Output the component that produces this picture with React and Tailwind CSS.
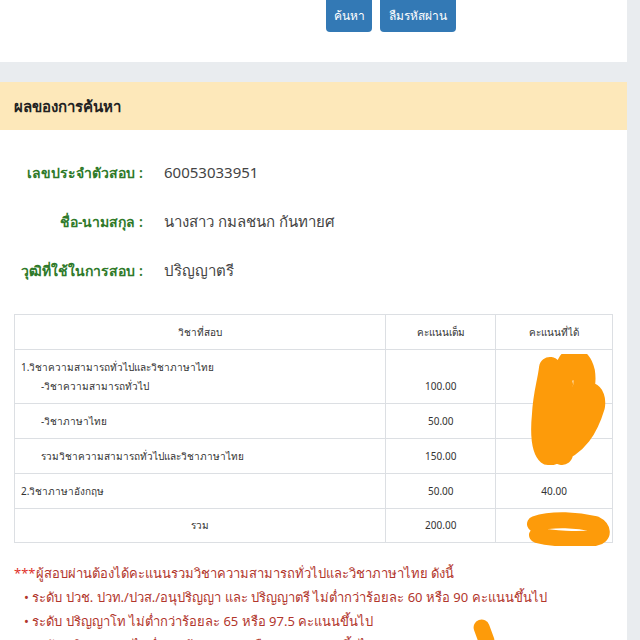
export default function App() {
  const font = { fontFamily: '"Noto Sans", "DejaVu Sans", sans-serif' };
  return (
    <div className="w-[640px] h-[640px] overflow-hidden bg-[#e9ecef]" style={font}>
      <div className="w-[627px] flex flex-col">
        {/* top card */}
        <div className="h-[62px] bg-white flex flex-col overflow-hidden">
          <div className="flex gap-[8px] pl-[326px] -mt-[4px]">
            <button className="w-[46px] h-[36px] rounded-[4px] bg-[#3379b5] text-white text-[12px] pt-[4px]">ค้นหา</button>
            <button className="w-[76px] h-[36px] rounded-[4px] bg-[#3379b5] text-white text-[12px] pt-[4px]">ลืมรหัสผ่าน</button>
          </div>
        </div>
        <div className="h-[20px]" />
        {/* result card */}
        <div className="bg-white h-[600px] flex flex-col">
          <div className="h-[48px] bg-[#fde8ba] flex items-center pl-[14px] text-[15px] font-semibold text-[#222]">
            ผลของการค้นหา
          </div>
          <div className="pt-[27px] flex flex-col gap-[18px]">
            {[
              ['เลขประจำตัวสอบ', '60053033951'],
              ['ชื่อ-นามสกุล', 'นางสาว กมลชนก กันทายศ'],
              ['วุฒิที่ใช้ในการสอบ', 'ปริญญาตรี'],
            ].map(([l, v]) => (
              <div key={l} className="flex items-center h-[31px]">
                <div className="w-[145px] text-right text-[#2f7a2a] text-[14px] font-semibold pr-[2px]">{l} :</div>
                <div className="pl-[19px] text-[#444] text-[15px]">{v}</div>
              </div>
            ))}
          </div>
          <div className="mt-[28px] mx-[14px] w-[599px] relative">
            <table className="w-full border-collapse text-[10px] text-[#333]">
              <colgroup>
                <col className="w-[372px]" />
                <col className="w-[110px]" />
                <col className="w-[117px]" />
              </colgroup>
              <tbody>
                <tr className="h-[35px]">
                  <td className="border border-[#dcdfe3] text-center">วิชาที่สอบ</td>
                  <td className="border border-[#dcdfe3] text-center">คะแนนเต็ม</td>
                  <td className="border border-[#dcdfe3] text-center">คะแนนที่ได้</td>
                </tr>
                <tr className="h-[54px]">
                  <td className="border border-[#dcdfe3] pl-[6px] align-middle">
                    <div className="leading-[19px]">1.วิชาความสามารถทั่วไปและวิชาภาษาไทย</div>
                    <div className="leading-[19px] pl-[20px]">-วิชาความสามารถทั่วไป</div>
                  </td>
                  <td className="border border-[#dcdfe3] text-center align-bottom pb-[9px]">100.00</td>
                  <td className="border border-[#dcdfe3]"></td>
                </tr>
                <tr className="h-[35px]">
                  <td className="border border-[#dcdfe3] pl-[26px]">-วิชาภาษาไทย</td>
                  <td className="border border-[#dcdfe3] text-center">50.00</td>
                  <td className="border border-[#dcdfe3]"></td>
                </tr>
                <tr className="h-[35px]">
                  <td className="border border-[#dcdfe3] pl-[26px]">รวมวิชาความสามารถทั่วไปและวิชาภาษาไทย</td>
                  <td className="border border-[#dcdfe3] text-center">150.00</td>
                  <td className="border border-[#dcdfe3]"></td>
                </tr>
                <tr className="h-[35px]">
                  <td className="border border-[#dcdfe3] pl-[6px]">2.วิชาภาษาอังกฤษ</td>
                  <td className="border border-[#dcdfe3] text-center">50.00</td>
                  <td className="border border-[#dcdfe3] text-center">40.00</td>
                </tr>
                <tr className="h-[34px]">
                  <td className="border border-[#dcdfe3] text-center">รวม</td>
                  <td className="border border-[#dcdfe3] text-center">200.00</td>
                  <td className="border border-[#dcdfe3]"></td>
                </tr>
              </tbody>
            </table>
            <svg className="absolute left-[508px] top-[40px]" width="90" height="115" viewBox="0 0 90 115">
              <path d="M28 14 C26 30 22 40 21 60 C19 80 20 95 26 100 M28 14 C34 22 34 40 38 55 M44 18 C45 2 58 0 62 18 C64 30 60 45 56 60 M40 30 C38 50 42 80 40 100 M58 45 C64 35 74 38 72 52 C66 72 56 92 30 100 M30 60 C40 70 45 80 50 70" stroke="#fd9b0a" strokeWidth="22" strokeLinecap="round" strokeLinejoin="round" fill="none" />
            </svg>
            <svg className="absolute left-[509px] top-[198px]" width="92" height="34" viewBox="0 0 92 34">
              <path d="M12 12 C30 6 55 8 72 12 C80 16 82 24 72 26 C55 28 30 27 14 23" stroke="#fd9b0a" strokeWidth="16" strokeLinecap="round" strokeLinejoin="round" fill="none" />
            </svg>
          </div>
          <div className="mt-[18px] pl-[14px] text-[#b2362c] text-[13px]">
            <div className="h-[24px] leading-[24px]"><span className="text-[#e0302a]">***</span>ผู้สอบผ่านต้องได้คะแนนรวมวิชาความสามารถทั่วไปและวิชาภาษาไทย ดังนี้</div>
            <div className="h-[24px] leading-[24px] pl-[10px]">• ระดับ ปวช. ปวท./ปวส./อนุปริญญา และ ปริญญาตรี ไม่ต่ำกว่าร้อยละ 60 หรือ 90 คะแนนขึ้นไป</div>
            <div className="h-[24px] leading-[24px] pl-[10px]">• ระดับ ปริญญาโท ไม่ต่ำกว่าร้อยละ 65 หรือ 97.5 คะแนนขึ้นไป</div>
            <div className="h-[24px] leading-[24px] pl-[10px] relative">• ระดับ ปริญญาเอก ไม่ต่ำกว่าร้อยละ 70 หรือ 105 คะแนนขึ้นไป
              <span className="absolute left-[462px] -top-[14px] w-[16px] h-[30px] rounded-full bg-[#fd9b0a] rotate-[-20deg]" />
            </div>
          </div>
        </div>
      </div>
    </div>
  );
}
